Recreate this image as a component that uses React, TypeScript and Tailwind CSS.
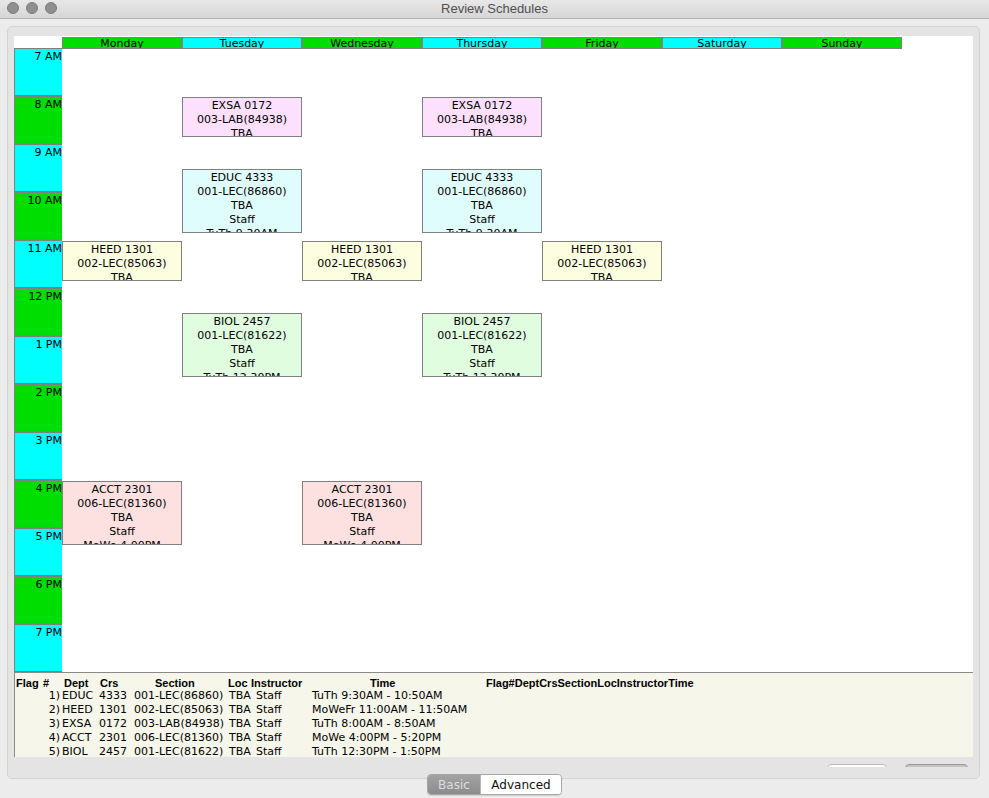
import React from "react";

const DAYS = ["Monday", "Tuesday", "Wednesday", "Thursday", "Friday", "Saturday", "Sunday"];
const HOURS = ["7 AM", "8 AM", "9 AM", "10 AM", "11 AM", "12 PM", "1 PM", "2 PM", "3 PM", "4 PM", "5 PM", "6 PM", "7 PM"];

type Block = { day: number; start: number; mins: number; bg: string; lines: string[] };

const BLOCKS: Block[] = [
  { day: 1, start: 8 * 60, mins: 50, bg: "bg-[#fde0fd]", lines: ["EXSA 0172", "003-LAB(84938)", "TBA", "Staff", "TuTh 8:00AM"] },
  { day: 3, start: 8 * 60, mins: 50, bg: "bg-[#fde0fd]", lines: ["EXSA 0172", "003-LAB(84938)", "TBA", "Staff", "TuTh 8:00AM"] },
  { day: 1, start: 9 * 60 + 30, mins: 80, bg: "bg-[#e0fdfd]", lines: ["EDUC 4333", "001-LEC(86860)", "TBA", "Staff", "TuTh 9:30AM", "- 10:50AM"] },
  { day: 3, start: 9 * 60 + 30, mins: 80, bg: "bg-[#e0fdfd]", lines: ["EDUC 4333", "001-LEC(86860)", "TBA", "Staff", "TuTh 9:30AM", "- 10:50AM"] },
  { day: 0, start: 11 * 60, mins: 50, bg: "bg-[#fdfde0]", lines: ["HEED 1301", "002-LEC(85063)", "TBA", "Staff"] },
  { day: 2, start: 11 * 60, mins: 50, bg: "bg-[#fdfde0]", lines: ["HEED 1301", "002-LEC(85063)", "TBA", "Staff"] },
  { day: 4, start: 11 * 60, mins: 50, bg: "bg-[#fdfde0]", lines: ["HEED 1301", "002-LEC(85063)", "TBA", "Staff"] },
  { day: 1, start: 12 * 60 + 30, mins: 80, bg: "bg-[#e0fde0]", lines: ["BIOL 2457", "001-LEC(81622)", "TBA", "Staff", "TuTh 12:30PM", "- 1:50PM"] },
  { day: 3, start: 12 * 60 + 30, mins: 80, bg: "bg-[#e0fde0]", lines: ["BIOL 2457", "001-LEC(81622)", "TBA", "Staff", "TuTh 12:30PM", "- 1:50PM"] },
  { day: 0, start: 16 * 60, mins: 80, bg: "bg-[#fde0e0]", lines: ["ACCT 2301", "006-LEC(81360)", "TBA", "Staff", "MoWe 4:00PM", "- 5:20PM"] },
  { day: 2, start: 16 * 60, mins: 80, bg: "bg-[#fde0e0]", lines: ["ACCT 2301", "006-LEC(81360)", "TBA", "Staff", "MoWe 4:00PM", "- 5:20PM"] },
];

const ROWS = [
  ["1)", "EDUC", "4333", "001-LEC(86860)", "TBA", "Staff", "TuTh 9:30AM - 10:50AM"],
  ["2)", "HEED", "1301", "002-LEC(85063)", "TBA", "Staff", "MoWeFr 11:00AM - 11:50AM"],
  ["3)", "EXSA", "0172", "003-LAB(84938)", "TBA", "Staff", "TuTh 8:00AM - 8:50AM"],
  ["4)", "ACCT", "2301", "006-LEC(81360)", "TBA", "Staff", "MoWe 4:00PM - 5:20PM"],
  ["5)", "BIOL", "2457", "001-LEC(81622)", "TBA", "Staff", "TuTh 12:30PM - 1:50PM"],
];

const COLS = "grid grid-cols-[27px_20px_36px_35px_94px_23px_60px_175px_1fr]";

function TitleBar() {
  return (
    <div className="grid h-[19px] grid-cols-[1fr_auto_1fr] border-b border-[#b3b3b3] bg-gradient-to-b from-[#e8e8e8] to-[#d6d6d6]">
      <div className="flex gap-[7px] pl-[7px] pt-[2px]">
        {[0, 1, 2].map((i) => (
          <span key={i} className="size-[12px] rounded-full border border-[#7c7c7c] bg-[#8f8f8f]" />
        ))}
      </div>
      <p className="pt-px font-['Liberation_Sans',sans-serif] text-[13px] leading-[15px] text-[#4f4f4f]">Review Schedules</p>
      <div />
    </div>
  );
}

function Schedule() {
  return (
    <div className="flex h-[636px] w-[959px] flex-col bg-white font-['DejaVu_Sans',sans-serif] text-[11px] text-black">
      <div className="flex h-[12px] shrink-0">
        <div className="w-[48px] shrink-0" />
        {DAYS.map((d, i) => (
          <div
            key={d}
            className={`mt-px h-[12px] w-[120px] shrink-0 overflow-hidden border border-[#808080] text-center leading-[11px] ${
              i % 2 === 0 ? "bg-[#00dd00]" : "bg-[#00ffff]"
            }`}
          >
            {d}
          </div>
        ))}
      </div>
      <div className="flex">
        <div className="flex w-[48px] shrink-0 flex-col">
          {HOURS.map((h, i) => (
            <div
              key={h}
              className={`h-[48px] border-y border-l border-[#808080] pt-px text-right leading-[14px] ${
                i % 2 === 0 ? "bg-[#00ffff]" : "bg-[#00dd00]"
              }`}
            >
              {h}
            </div>
          ))}
        </div>
        <div className="relative flex-1">
          {BLOCKS.map((b, i) => (
            <div
              key={i}
              className={`absolute w-[120px] overflow-hidden border border-[#808080] pt-px text-center leading-[14px] ${b.bg}`}
              style={{ left: b.day * 120, top: 1 + (b.start - 420) * 0.8, height: b.mins * 0.8 }}
            >
              {b.lines.map((l, j) => (
                <p key={j} className="whitespace-nowrap">{l}</p>
              ))}
            </div>
          ))}
        </div>
      </div>
    </div>
  );
}

function SummaryTable() {
  return (
    <div className="h-[85px] w-[959px] overflow-hidden border-l border-t border-[#8a8a8a] bg-[#f6f6ea] text-[11px] text-black">
      <div className={`${COLS} h-[16px] whitespace-nowrap pt-[4px] font-['Liberation_Sans',sans-serif] font-bold leading-[13px]`}>
        <span className="pl-px">Flag</span>
        <span className="pl-px">#</span>
        <span className="pl-[2px]">Dept</span>
        <span className="pl-[2px]">Crs</span>
        <span className="pl-[22px]">Section</span>
        <span className="pl-px">Loc</span>
        <span className="pl-px">Instructor</span>
        <span className="pl-[60px]">Time</span>
        <span className="pl-px">Flag#DeptCrsSectionLocInstructorTime</span>
      </div>
      {ROWS.map((r) => (
        <div key={r[0]} className={`${COLS} h-[14px] whitespace-nowrap font-['DejaVu_Sans',sans-serif] leading-[14px]`}>
          <span />
          <span className="pr-[2px] text-right">{r[0]}</span>
          <span>{r[1]}</span>
          <span className="pl-px">{r[2]}</span>
          <span className="pl-px">{r[3]}</span>
          <span className="pl-[2px]">{r[4]}</span>
          <span className="pl-[6px]">{r[5]}</span>
          <span className="pl-[2px]">{r[6]}</span>
          <span />
        </div>
      ))}
    </div>
  );
}

export default function App() {
  return (
    <div className="flex h-[798px] w-[989px] flex-col overflow-hidden bg-[#ececec]">
      <TitleBar />
      <div className="ml-[7px] mt-[7px] h-[753px] w-[973px] rounded-[5px] border border-[#d3d3d3] bg-[#e4e4e4] pl-[6px] pt-[9px]">
        <Schedule />
        <SummaryTable />
        <div className="mt-[7px] flex h-[3px] justify-end gap-[18px] overflow-hidden pr-[11px]">
          <span className="h-[8px] w-[60px] rounded-[4px] border border-[#b9b9b9] bg-white" />
          <span className="h-[8px] w-[63px] rounded-[4px] border border-[#9a9a9a] bg-[#c4c4c4]" />
        </div>
      </div>
      <div className="relative z-10 -mt-[5px] flex justify-center font-['DejaVu_Sans',sans-serif] text-[12px]">
        <div className="flex h-[21px] overflow-hidden rounded-[4px] border border-[#a6a6a6] shadow-[0_1px_1px_rgba(0,0,0,0.12)]">
          <span className="flex w-[52px] items-center justify-center bg-gradient-to-b from-[#a3a3a3] to-[#8c8c8c] text-[#dedede]">Basic</span>
          <span className="flex w-[81px] items-center justify-center border-l border-[#b5b5b5] bg-white text-[#111]">Advanced</span>
        </div>
      </div>
    </div>
  );
}
